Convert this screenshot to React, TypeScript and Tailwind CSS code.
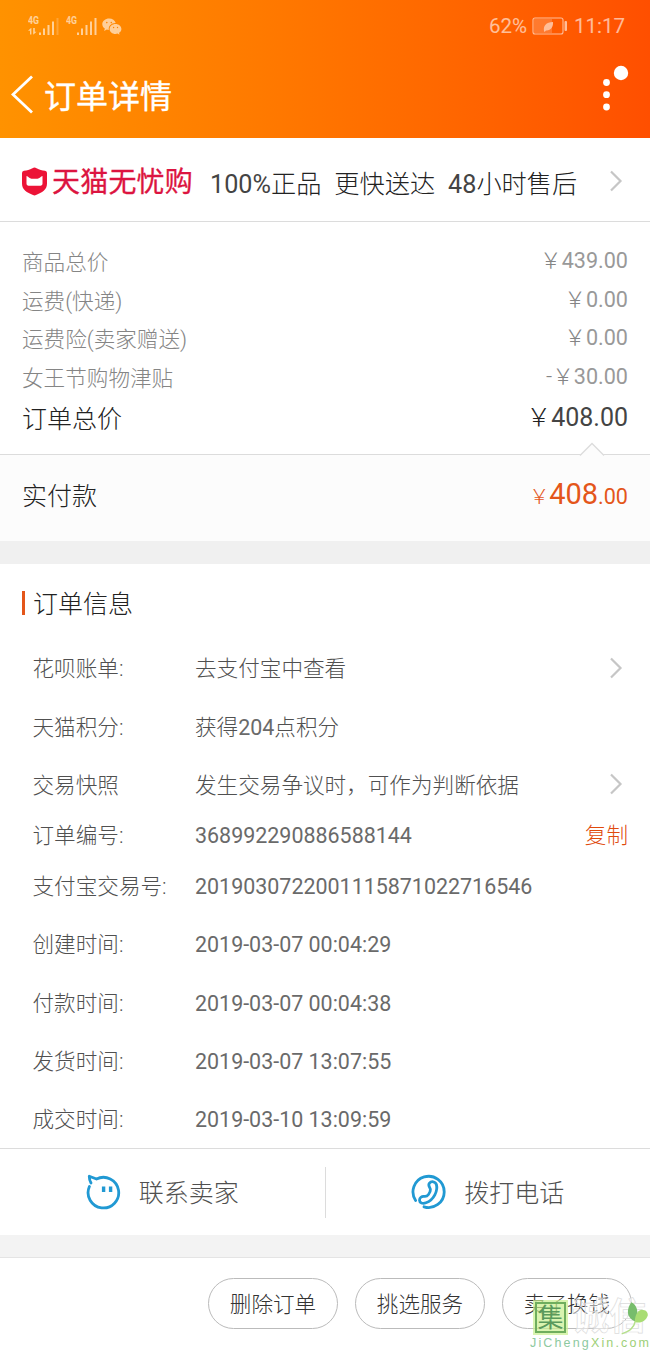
import { ReactNode } from 'react'

interface PriceRow {
  label: string
  value: string
}

interface InfoRow {
  label: string
  value: ReactNode
  height: string
  arrow?: boolean
  copy?: boolean
}

const priceRows: PriceRow[] = [
  { label: '商品总价', value: '439.00' },
  { label: '运费(快递)', value: '0.00' },
  { label: '运费险(卖家赠送)', value: '0.00' },
  { label: '女王节购物津贴', value: '30.00' },
]

const infoRows: InfoRow[] = [
  { label: '花呗账单:', value: '去支付宝中查看', height: 'h-[59px]', arrow: true },
  { label: '天猫积分:', value: <>获得<Num>204</Num>点积分</>, height: 'h-[58px]' },
  { label: '交易快照', value: '发生交易争议时，可作为判断依据', height: 'h-[58px]', arrow: true },
  { label: '订单编号:', value: <Num>368992290886588144</Num>, height: 'h-[43px]', copy: true },
  { label: '支付宝交易号:', value: <Num>2019030722001115871022716546</Num>, height: 'h-[58px]' },
  { label: '创建时间:', value: <Num>2019-03-07 00:04:29</Num>, height: 'h-[59px]' },
  { label: '付款时间:', value: <Num>2019-03-07 00:04:38</Num>, height: 'h-[58px]' },
  { label: '发货时间:', value: <Num>2019-03-07 13:07:55</Num>, height: 'h-[58px]' },
  { label: '成交时间:', value: <Num>2019-03-10 13:09:59</Num>, height: 'h-[58px]' },
]

const actions = ['删除订单', '挑选服务', '卖了换钱']

// digits are one step heavier but paler than the Chinese text around them
function Num({ children }: { children: ReactNode }) {
  return <span className="text-[21.450px] font-normal text-[#6a6a6a]">{children}</span>
}

function Chevron() {
  return (
    <svg className="h-[22px] w-[14px] shrink-0" viewBox="0 0 14 22" fill="none" stroke="#c6c6c6" strokeWidth="2.2">
      <path d="M2 1.5 11.5 11 2 20.5" />
    </svg>
  )
}

function Signal({ data }: { data?: boolean }) {
  return (
    <svg className="h-[22px] w-[32px]" viewBox="0 0 32 22" fill="#fff">
      <text x="0" y="9" fontSize="10" fontWeight="700" fontFamily="Roboto, sans-serif" textLength="11" lengthAdjust="spacingAndGlyphs">
        4G
      </text>
      {data && <path d="M3 13 0 15.800h2V19.500h1.400V13zM5.500 19.500 8.500 16.800H6.800V13H5.200v6.500z" />}
      <path d="M11 17.500h2v2.500h-2zM15 13.500h2v6.500h-2zM19.500 10h2v10h-2zM24 6.500h2v13.500h-2z" />
      <path d="M28.500 3h2v17h-2z" opacity={data ? 0.35 : 1} />
    </svg>
  )
}

function WechatIcon() {
  return (
    <svg className="h-[17px] w-[20px]" viewBox="0 0 20 17">
      <path fill="#fff" d="M7.200.5C3.300.5.300 3 .300 6.200c0 1.800 1 3.400 2.500 4.400L2.200 13l2.600-1.400c.6.200 1.400.3 2 .3C6.200 8 9.400 5 13.700 5.100 13 2.400 10.400.5 7.200.5z" />
      <path fill="#fff" d="M13.500 5.900c-3.300 0-5.900 2.200-5.900 5s2.600 5 5.900 5c.7 0 1.400-.1 2-.3l2 1.100-.5-1.900c1.500-.9 2.400-2.300 2.400-3.900 0-2.800-2.600-5-5.900-5z" />
      <g fill="#fe8505">
        <circle cx="4.800" cy="4.600" r=".8" />
        <circle cx="9.300" cy="4.600" r=".8" />
        <circle cx="11.600" cy="9.500" r=".7" />
        <circle cx="15.500" cy="9.500" r=".7" />
      </g>
    </svg>
  )
}

function Battery() {
  return (
    <svg className="h-[18px] w-[36px]" viewBox="0 0 36 18">
      <rect x="1" y="1" width="30" height="16" rx="2" fill="none" stroke="#fff" strokeWidth="1.100" />
      <rect x="2" y="2" width="18" height="14" fill="#fff" opacity=".3" />
      <path d="M12 14c-1-5 2-9 9-9 .5 5-2.500 9-7 8.500L12.500 15z" fill="#fff" />
      <rect x="32.500" y="4" width="2.500" height="10" rx="1" fill="#fff" />
    </svg>
  )
}

function Header() {
  return (
    <header className="h-[138px] bg-linear-to-r from-[#ff9200] to-[#ff4f00] text-white">
      <div className="flex h-[52px] items-center pl-7 pr-[25px] opacity-60">
        <Signal data />
        <div className="ml-[6px]">
          <Signal />
        </div>
        <div className="ml-[4px]">
          <WechatIcon />
        </div>
        <div className="ml-auto flex items-center text-[20.500px]">
          <span>62%</span>
          <span className="ml-[5px]">
            <Battery />
          </span>
          <span className="ml-[6px]">11:17</span>
        </div>
      </div>
      <div className="flex h-[86px] items-center pl-[11px] pr-[21px]">
        <svg className="h-[40px] w-[23px]" viewBox="0 0 23 40" fill="none" stroke="#fff" strokeWidth="2.800">
          <path d="M21 1.500 2 19.500 21 37.500" />
        </svg>
        <h1 className="ml-[10px] pt-[3px] text-[32px] font-normal leading-10 [-webkit-text-stroke:0.400px_white]">订单详情</h1>
        <div className="ml-auto flex h-[60px]">
          <svg className="h-[60px] w-[28px]" viewBox="0 0 28 60" fill="#fff">
            <circle cx="5.500" cy="17.500" r="3.400" />
            <circle cx="5.500" cy="29.700" r="3.400" />
            <circle cx="5.500" cy="42" r="3.400" />
            <circle cx="20" cy="8" r="7.200" />
          </svg>
        </div>
      </div>
    </header>
  )
}

function ServiceBar() {
  return (
    <section className="flex h-[84px] items-center border-b border-[#dcdcdc] pl-[21px] pr-[27px] pt-[5px] text-[25.200px] text-[#222]">
      <svg className="mb-[2px] h-[29px] w-[27px]" viewBox="0 0 27 29">
        <path d="M11.500 1.200Q13.500 0 15.500 1.200C18.500 2.800 21 3.300 24 3.700Q26 4 26 6v10.500C26 23 21 25.500 15 28.100q-1.500.7-3 0C6 25.500 1 23 1 16.500V6Q1 4 3 3.700C6 3.300 8.500 2.800 11.500 1.200z" fill="#ec1337" />
        <path d="M5.500 9c1.800.2 3 2.700 5 2.700h6c2 0 3.200-2.500 5-2.700v7.500c0 1.300-.8 2.200-2 2.200h-12c-1.200 0-2-.9-2-2.200z" fill="#fff" />
      </svg>
      <span className="ml-[4px] pt-[2px] text-[28px] font-normal tracking-[0.200px] text-[#dc1440] [-webkit-text-stroke:0.300px_#dc1440]">天猫无忧购</span>
      <div className="ml-[17px] flex gap-[13px] pt-[5px]">
        <span>
          <span className="font-normal text-[#444]">100%</span>正品
        </span>
        <span>更快送达</span>
        <span>
          <span className="font-normal text-[#444]">48</span>小时售后
        </span>
      </div>
      <span className="ml-auto pb-[2px]">
        <Chevron />
      </span>
    </section>
  )
}

function PriceSummary() {
  return (
    <section className="h-[232px] px-[22px] pt-[22px] text-[21.600px]">
      {priceRows.map((row, i) => (
        <div key={row.label} className="flex h-[38.600px] items-center justify-between text-[#858585]">
          <span>{row.label}</span>
          <span className="pb-1">
            {/* the last row is a discount */}
            {i === 3 && '-'}￥<span className="font-normal text-[#999]">{row.value}</span>
          </span>
        </div>
      ))}
      <div className="flex h-[43px] items-center justify-between text-[25px] text-[#222]">
        <span>订单总价</span>
        <span className="pb-1">
          ￥<span className="font-normal text-[#444]">408.00</span>
        </span>
      </div>
    </section>
  )
}

function PaidBar() {
  return (
    <section className="relative flex h-[87px] items-center justify-between border-t border-[#dcdcdc] bg-[#fcfcfc] px-[22px] pb-[3px] text-[25px] text-[#222]">
      {/* notch pointing at the total above */}
      <svg className="absolute right-[45px] top-[-13px] h-[14px] w-[26px]" viewBox="0 0 26 14">
        <path d="M1 13.500 13 1.500 25 13.500" fill="#fcfcfc" stroke="#dcdcdc" strokeWidth="1.300" />
      </svg>
      <span>实付款</span>
      <span className="flex items-baseline pb-[3px] text-[21.600px] font-normal text-[#e4561a]">
        <span className="text-[20px] font-light">￥</span>
        <span className="text-[29px]">408</span>
        <span>.00</span>
      </span>
    </section>
  )
}

function OrderInfo() {
  return (
    <section className="text-[21.600px] text-[#505050]">
      <div className="flex h-[75px] items-center pl-[22px] pt-1">
        <span className="mb-[2px] h-[24px] w-[3px] bg-[#e4561a]" />
        <h2 className="ml-[8px] pt-[2px] text-[25px] text-[#222]">订单信息</h2>
      </div>
      {infoRows.map((row) => (
        <div key={row.label} className={`flex items-center pl-[32.500px] pr-[22px] pt-[2px] ${row.height}`}>
          <span className="w-[162.500px] shrink-0">{row.label}</span>
          <span className="whitespace-nowrap">{row.value}</span>
          {row.arrow && (
            <span className="ml-auto mr-[5px] pb-1">
              <Chevron />
            </span>
          )}
          {row.copy && <button className="ml-auto text-[#e04a0c]">复制</button>}
        </div>
      ))}
    </section>
  )
}

function ContactItem({ icon, label }: { icon: ReactNode; label: string }) {
  return (
    <button className="flex flex-1 items-center justify-center gap-[17px]">
      {icon}
      <span className="pt-[4px]">{label}</span>
    </button>
  )
}

function ContactBar() {
  return (
    <section className="flex h-[87px] items-center border-t border-[#dcdcdc] text-[25px] text-[#505050]">
      <ContactItem
        label="联系卖家"
        icon={
          <svg className="h-[36px] w-[36px]" viewBox="0 0 36 36" fill="none" stroke="#2199d3" strokeWidth="2.800" strokeLinecap="round" strokeLinejoin="round">
            <path d="M3.400 12.500A15.300 15.300 0 1 0 10.500 5L3.300 2.200C3.200 4.500 3.700 6.700 5 9" />
            <path d="M17.600 12.500v5.500M24.600 12.500v5.500" strokeWidth="3.400" strokeLinecap="butt" />
          </svg>
        }
      />
      <div className="h-[51px] w-px bg-[#dcdcdc]" />
      <ContactItem
        label="拨打电话"
        icon={
          <svg className="h-[36px] w-[36px]" viewBox="0 0 36 36" fill="none" stroke="#2199d3" strokeWidth="2.800" strokeLinecap="round" strokeLinejoin="round">
            <path d="M4.600 26.500A15.600 15.600 0 1 1 13 32.800" />
            <path d="M18.300 9.300c2-2.500 6-2 7.100 1.200 1.700 6-2.400 15.500-10.400 18.300-3.500 1.200-6.500 0-6.500-2.500 0-2.600 2.200-4.300 4.800-3.900 2 .3 3-.3 4.200-1.900 1.500-1.900 2-3.300 1.900-5-.1-2-2.800-3.700-1.100-6.200z" />
          </svg>
        }
      />
    </section>
  )
}

function Watermark() {
  return (
    <div className="absolute bottom-0 right-0 h-[52px] w-[120px]">
      <div className="flex h-[39px] items-center pl-[3px]">
        <span className="bg-[#c9f08f]/70 p-[2px]">
          <span className="flex h-[31px] w-[31px] items-center justify-center border-2 border-[#6fae5e] text-[26px] font-normal leading-none text-[#5a9a5c]">集</span>
        </span>
        <span className="ml-[4px] text-[37px] font-bold leading-none text-white/50 [-webkit-text-stroke:0.700px_#dcdcdc]">诚信</span>
      </div>
      <p className="whitespace-nowrap font-['Liberation_Sans',sans-serif] text-[12.500px] font-normal leading-[13px] tracking-[2.150px] text-[#8dc9a0]">
        JiCheng<span className="text-[#9dcf78]">Xin.com</span>
      </p>
      <svg className="absolute right-0 top-[3px] h-[34px] w-[34px]" viewBox="0 0 30 30">
        <path d="M17 18C9 15 9 7 13.500 1 18 3 21 9 17 18z" fill="#77bd6c" />
        <path d="M16.500 18.500C17 10 21 7 24 8c3 0 4.500 3 4 5-2 5-6 7-11.500 5.500z" fill="#a9dd74" />
        <path d="M17 18c-1 5-5 9-12 11" fill="none" stroke="#b5e08a" strokeWidth="1.300" />
      </svg>
    </div>
  )
}

export default function App() {
  return (
    <main className="relative h-[1350px] w-[650px] overflow-hidden bg-white font-[Roboto,'Noto_Sans_CJK_SC',sans-serif]">
      <Header />
      <div className="font-light">
        <ServiceBar />
        <PriceSummary />
        <PaidBar />
        <div className="h-[23px] bg-[#f0f0f0]" />
        <OrderInfo />
        <ContactBar />
        <div className="h-[22px] bg-[#f3f3f3]" />
        <footer className="flex h-[93px] items-start justify-end gap-[17px] border-t border-[#e4e4e4] pr-[18px] pt-[20px]">
          {actions.map((label) => (
            <button key={label} className="h-[51px] w-[130px] rounded-full border border-[#bbb] pt-[3px] text-[21.600px] text-[#333]">
              {label}
            </button>
          ))}
        </footer>
      </div>
      <Watermark />
    </main>
  )
}
